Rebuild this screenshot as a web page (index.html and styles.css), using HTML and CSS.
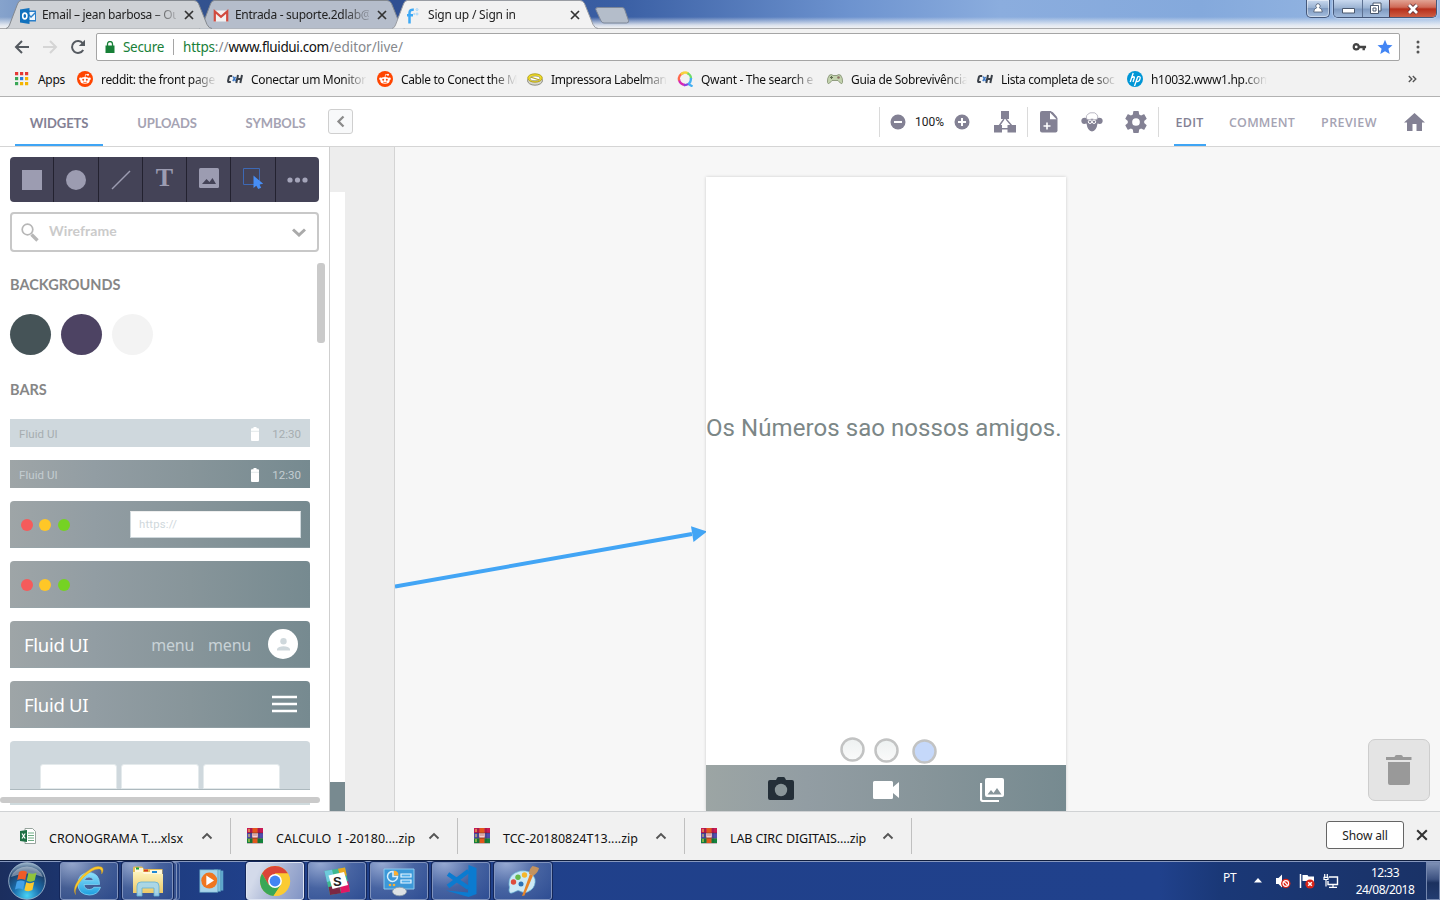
FILE: index.html
```html
<!DOCTYPE html>
<html lang="pt">
<head>
<meta charset="utf-8">
<title>Sign up / Sign in</title>
<link rel="stylesheet" href="styles.css">
</head>
<body>
<svg class="defs" width="0" height="0" aria-hidden="true">
  <defs>
    <radialGradient id="gOrb" cx=".5" cy=".9" r=".9"><stop offset="0" stop-color="#49d3f5"/><stop offset=".4" stop-color="#1a6fae"/><stop offset=".75" stop-color="#1b3e69"/><stop offset="1" stop-color="#9fb9cf"/></radialGradient>
    <linearGradient id="gIe" x1="0" y1="0" x2="0" y2="1"><stop offset="0" stop-color="#8fe0fb"/><stop offset="1" stop-color="#1d9fe0"/></linearGradient>
    <linearGradient id="gFolder" x1="0" y1="0" x2="0" y2="1"><stop offset="0" stop-color="#fdf3bd"/><stop offset="1" stop-color="#ecc968"/></linearGradient>
    <symbol id="x" viewBox="0 0 10 10"><path d="M1 1l8 8M9 1l-8 8" stroke="#333" stroke-width="1.7" fill="none"/></symbol>
    <symbol id="reddit" viewBox="0 0 16 16"><circle cx="8" cy="8" r="8" fill="#ff4500"/><ellipse cx="8" cy="9.400" rx="4.700" ry="3.300" fill="#fff"/><circle cx="3.400" cy="7.800" r="1.200" fill="#fff"/><circle cx="12.600" cy="7.800" r="1.200" fill="#fff"/><circle cx="11" cy="3.800" r="1" fill="#fff"/><path d="M8 6.400l.6-3 2.200.4" stroke="#fff" stroke-width=".7" fill="none"/><circle cx="6.200" cy="8.700" r="1" fill="#ff4500"/><circle cx="9.800" cy="8.700" r="1" fill="#ff4500"/><path d="M6 11q2 1.200 4 0" stroke="#ff4500" stroke-width=".7" fill="none"/></symbol>
    <symbol id="ceh" viewBox="0 0 16 16"><g fill="none" stroke-width="2" stroke="#3a4048"><path d="M5.200 5H3.200q-1 0-1.300 1l-.8 3.600q-.2 1.400.8 1.400h1.900"/><path d="M11 4l-1.700 8M15 4l-1.700 8M10.300 8h4.200"/></g><path d="M6 5.500l2.700 4.700M8.600 6l-2.800 4" stroke="#3d78c4" stroke-width="1.500"/></symbol>
    <symbol id="rar" viewBox="0 0 16 16"><path d="M0 0h16v5H0z" fill="#c81a55"/><path d="M0 5h16v5.400H0z" fill="#514cae"/><path d="M0 10.400h16V15H0z" fill="#13833c"/><path d="M0 15h16v1H0z" fill="#c6b6bd"/><path d="M5.500 0h5v15h-5z" fill="#e2571c"/><path d="M5.500 5h5v5h-5z" fill="#b02424"/><path d="M6 5v4h4V5M8 5v4" stroke="#fff" stroke-width="1.200" fill="none"/><path d="M2 1v3M2 6v3M2 11v3" stroke="#f3d84a"/><path d="M4 0v15M12 0v15M0 5h16M0 10.300h16" stroke="#222" stroke-opacity=".4" stroke-width=".8"/></symbol>
    <symbol id="up" viewBox="0 0 12 8"><path d="M1.500 6.500L6 2l4.500 4.500" fill="none" stroke="#555" stroke-width="1.900"/></symbol>
    <symbol id="battery" viewBox="0 0 8 14"><path d="M2.500 0h3v1.300H7q1 0 1 1V13q0 1-1 1H1q-1 0-1-1V2.300q0-1 1-1h1.500z" fill="#fff"/><path d="M0 4.300h8" stroke="#cfd8dc" stroke-width=".6"/></symbol>
    <symbol id="tabshape" viewBox="0 0 206 29"><path d="M0 28.500Q2.500 28 3.500 25L11.500 4Q12.500.5 15.500.5H188Q191 .5 192.500 3.500L201 24.500Q203 28.500 206 28.500" /></symbol>
  </defs>
</svg>

<div class="screen">
  <header class="titlebar">
    <nav class="tabs">
      <div class="tab first">
        <svg class="shape"><use href="#tabshape"/></svg>
        <svg class="fav" viewBox="0 0 16 16"><path d="M6 2.500h10v11H6z" fill="#2a7fc9"/><path d="M7 4h8v8H7z" fill="#eef6fd"/><path d="M7 5l4 4 5-5" stroke="#2a7fc9" stroke-width="1.400" fill="none"/><path d="M0 1.500L9.500 0v16L0 14.500z" fill="#1171bd"/><ellipse cx="4.800" cy="8" rx="2.100" ry="2.900" fill="none" stroke="#fff" stroke-width="1.600"/></svg>
        <span class="title t1">Email – jean barbosa – Ou</span>
        <svg class="close"><use href="#x"/></svg>
      </div>
      <div class="tab second">
        <svg class="shape"><use href="#tabshape"/></svg>
        <svg class="fav" viewBox="0 0 16 16"><path d="M1 2.500h14v11H1z" fill="#f3f0f0"/><path d="M1.800 13.500v-10L8 8.800l6.200-5.300v10" fill="none" stroke="#d14a3f" stroke-width="2.200"/></svg>
        <span class="title t2">Entrada - suporte.2dlab@</span>
        <svg class="close"><use href="#x"/></svg>
      </div>
      <div class="tab active">
        <svg class="shape"><use href="#tabshape"/></svg>
        <svg class="fav" viewBox="0 0 16 16"><path d="M7.800 1.700Q3.500 1.200 3.500 5v10.500M1 7.300h6" fill="none" stroke="#3fa9f5" stroke-width="2.500"/><g fill="none" stroke="#9bd3fb" stroke-width=".9"><circle cx="11" cy="1.600" r="1"/><circle cx="11" cy="6" r="1"/><circle cx="8.200" cy="6" r=".6"/></g></svg>
        <span class="title t3">Sign up / Sign in</span>
        <svg class="close"><use href="#x"/></svg>
      </div>
      <svg class="newtab" viewBox="0 0 34 17"><path d="M3 .5h24q2 0 2.500 1.500l4 11.500q.5 2.500-2 2.500H9q-2 0-3-2L.8 2.500Q.3.500 3 .5z" fill="#b4bdca" stroke="#7d8798"/></svg>
    </nav>
    <div class="wincontrols">
      <div class="wbtn user"><svg width="10" height="10" viewBox="0 0 10 10"><path d="M5 .7a2.200 2.200 0 0 1 1.200 4Q9.300 5.500 9.300 9H.7Q.7 5.500 3.800 4.700A2.200 2.200 0 0 1 5 .7z" fill="#fff" stroke="#4a586e" stroke-width=".8"/></svg></div>
      <div class="wgroup">
        <div class="wbtn min"><svg width="13" height="6"><path d="M.5 .5h12v4.500H.5z" fill="#fff" stroke="#4a586e"/></svg></div>
        <div class="wbtn max"><svg width="13" height="13"><path d="M4 1h8v8H9.500v2.500h-8v-8H4z" fill="#fff" stroke="#4a586e"/><path d="M4 6h3v3H4zM4 3.500h5.500V9" fill="none" stroke="#4a586e"/></svg></div>
        <div class="wbtn cls"><svg width="14" height="12"><path d="M3 2l8 8M11 2l-8 8" stroke="#5e3038" stroke-width="4.500"/><path d="M3 2l8 8M11 2l-8 8" stroke="#fff" stroke-width="2.800"/></svg></div>
      </div>
    </div>
  </header>

  <div class="toolbar">
    <svg class="nav" viewBox="0 0 16 16"><path d="M15 8H2.500M8 2L2 8l6 6" fill="none" stroke="#555a60" stroke-width="2"/></svg>
    <svg class="nav" viewBox="0 0 16 16"><path d="M1 8h12.500M8 2l6 6-6 6" fill="none" stroke="#d5d5d5" stroke-width="2"/></svg>
    <svg class="nav" viewBox="0 0 16 16"><path d="M13.200 11A6 6 0 1 1 12.800 4.300" fill="none" stroke="#555a60" stroke-width="2"/><path d="M15 .8V7H8.800z" fill="#555a60"/></svg>
    <div class="omnibox">
      <svg class="lock" viewBox="0 0 10 12"><path d="M.5 4.500h9V12h-9z" fill="#188038"/><path d="M2.500 5V3a2.500 2.500 0 0 1 5 0v2" fill="none" stroke="#188038" stroke-width="1.300"/></svg>
      <span class="secure">Secure</span><i class="vr"></i>
      <span class="url"><b>https</b>://<em>www.fluidui.com</em>/editor/live/</span>
      <svg class="key" viewBox="0 0 16 10"><path fill-rule="evenodd" d="M4.500.8a4 4 0 0 1 3.900 2.900H15v2.500h-1.200v2.300h-2.600V6.200H8.400A4 4 0 1 1 4.500.8zm0 2.600a1.500 1.500 0 1 0 0 3 1.500 1.500 0 0 0 0-3z" fill="#444"/></svg>
      <svg class="star" viewBox="0 0 16 16"><path d="M8 .8l2.100 5 5.400.4-4.100 3.600 1.300 5.300L8 12.200l-4.700 2.900 1.300-5.300L.5 6.200l5.400-.4z" fill="#4285f4"/></svg>
    </div>
    <svg class="kebab" viewBox="0 0 4 14"><g fill="#555"><circle cx="2" cy="2" r="1.500"/><circle cx="2" cy="7" r="1.500"/><circle cx="2" cy="12" r="1.500"/></g></svg>
  </div>

  <div class="bookmarks">
    <div class="bm apps"><svg viewBox="0 0 14 14"><path d="M0 0h3.200v3.200H0zM5 0h3.200v3.200H5zM10 0h3.200v3.200H10z" fill="#e53935"/><path d="M0 5h3.200v3.200H0z" fill="#3aa757"/><path d="M5 5h3.200v3.200H5z" fill="#2a7de1"/><path d="M10 5h3.200v3.200H10zM5 10h3.200v3.200H5zM10 10h3.200v3.200H10z" fill="#f4b400"/><path d="M0 10h3.200v3.200H0z" fill="#3aa757"/></svg><span>Apps</span></div>
    <div class="bm"><svg><use href="#reddit"/></svg><span>reddit: the front page</span></div>
    <div class="bm"><svg><use href="#ceh"/></svg><span>Conectar um Monitor</span></div>
    <div class="bm"><svg><use href="#reddit"/></svg><span class="k3">Cable to Conect the M</span></div>
    <div class="bm"><svg viewBox="0 0 16 16"><ellipse cx="8" cy="9.600" rx="7.500" ry="4.600" fill="#d7d7cf" stroke="#77776a" stroke-width=".8"/><ellipse cx="8" cy="7" rx="7.300" ry="4.200" fill="#f2dd25" stroke="#a19115" stroke-width=".8"/><ellipse cx="8" cy="7.400" rx="4.800" ry="2.300" fill="#fff" stroke="#77776a" stroke-width=".6"/><path d="M4 6.300l8 2.500" stroke="#b5a417" stroke-width="1.200"/></svg><span class="k4">Impressora Labelman</span></div>
    <div class="bm"><svg viewBox="0 0 16 16"><g fill="none" stroke-width="2.300"><path d="M8 14A6.200 6.200 0 0 1 2 8" stroke="#d627b3"/><path d="M2 9.500A6.200 6.200 0 0 1 7 1.800" stroke="#ff6a4d"/><path d="M4 3.300A6.200 6.200 0 0 1 11.500 2.700" stroke="#f6d33c"/><path d="M10.500 2.300A6 6 0 0 1 14 8" stroke="#6fdc6a"/><path d="M14 7q0 4.500-2.500 6l4 2.500" stroke="#45b0f2"/><path d="M7 14q2.500.3 4-1" stroke="#8c41e0"/></g></svg><span class="k5">Qwant - The search e</span></div>
    <div class="bm"><svg viewBox="0 0 16 16"><path d="M2.500 4Q5 3 6 4.500h4Q11 3 13.500 4 16 7 15.600 11.500q-.6 2-2.300.5L11 9.500H5L2.700 12Q1 13.500.4 11.500 0 7 2.500 4z" fill="#c3d3ae" stroke="#7d8c6c" stroke-width=".8"/><path d="M4.500 5v3M3 6.500h3" stroke="#5c6a4c"/><circle cx="11.500" cy="6.500" r="1.300" fill="#8a6f62"/></svg><span>Guia de Sobrevivência</span></div>
    <div class="bm"><svg><use href="#ceh"/></svg><span class="k7">Lista completa de soc</span></div>
    <div class="bm"><svg viewBox="0 0 16 16"><circle cx="8" cy="8" r="8" fill="#0096d6"/><path d="M6.200 2L3.200 11M4.700 6.800Q8 4.500 7.200 7.300L6 11M10.800 5.500L7.500 15M10.800 5.700q3.200-.7 2.200 2.200-1 3.400-3.800 2.600" fill="none" stroke="#fff" stroke-width="1.300"/></svg><span class="k8">h10032.www1.hp.com</span></div>
    <svg class="more" viewBox="0 0 9 8"><path d="M.8 1l3 3-3 3M4.800 1l3 3-3 3" fill="none" stroke="#555" stroke-width="1.400"/></svg>
  </div>

  <div class="appbar">
    <nav class="lefttabs"><a class="on">WIDGETS</a><a>UPLOADS</a><a>SYMBOLS</a></nav>
    <div class="collapse"><svg width="9" height="13" viewBox="0 0 9 13"><path d="M7.500 1.500l-5 5 5 5" fill="none" stroke="#8b8b8b" stroke-width="2.300"/></svg></div>
    <div class="tools">
      <i class="sep"></i>
      <svg class="i-minus" width="16" height="16"><circle cx="8" cy="8" r="7.500" fill="#838194"/><path d="M4 8h8" stroke="#fff" stroke-width="2"/></svg>
      <span class="zoom">100%</span>
      <svg class="i-plus" width="16" height="16"><circle cx="8" cy="8" r="7.500" fill="#838194"/><path d="M4 8h8M8 4v8" stroke="#fff" stroke-width="2"/></svg>
      <svg class="i-tree" width="22" height="22" viewBox="0 0 22 22"><path d="M7 0h8v8H7zM0 14h8v7.500H0zM13.500 14H22v7.500h-8.500z" fill="#838194"/><path d="M10 8l-5 7M12 8l6 7M8 17.700h6" stroke="#838194" stroke-width="1.400"/></svg>
      <i class="sep s2"></i>
      <svg class="i-page" width="18" height="22" viewBox="0 0 18 22"><path d="M2 0h9l6.500 7v12.500q0 2-2 2H2q-2 0-2-2V2q0-2 2-2z" fill="#838194"/><path d="M10 1.500l6.500 6.700H10z" fill="#fff"/><path d="M11.500 2.200l5.500 5.300V6L12.500.8z" fill="#838194"/><path d="M3.500 15h7M7 11.500v7" stroke="#fff" stroke-width="1.600"/></svg>
      <svg class="i-sheep" width="22" height="20" viewBox="0 0 22 20"><path d="M5.500 6Q.5 5 .3 9q.5 4 5.200 2.500Q6.500 19 11 19.500q4.500-.5 5.500-8 4.700 1.500 5.200-2.500-.2-4-5.200-3z" fill="#838194"/><path d="M5.500 7Q4.500 3 7 2.200 9 .2 11 .8q3-.6 4.500 1.400Q17.500 3.500 16.500 7q-2 1.500-5.500 0-3.500 1.500-5.500 0z" fill="#fff" stroke="#a9a7b5" stroke-width=".8"/><circle cx="9" cy="9.800" r="1.700" fill="#838194" stroke="#fff"/><circle cx="13" cy="9.800" r="1.700" fill="#838194" stroke="#fff"/></svg>
      <svg class="i-gear" width="22" height="22" viewBox="2 2 20 20"><path fill="#838194" d="M19.430 12.980c.04-.32.07-.64.07-.98s-.03-.66-.07-.98l2.110-1.650c.19-.15.24-.42.12-.64l-2-3.460c-.12-.22-.39-.3-.61-.22l-2.490 1c-.52-.4-1.080-.73-1.690-.98l-.38-2.650C14.460 2.180 14.250 2 14 2h-4c-.25 0-.46.18-.49.42l-.38 2.650c-.61.25-1.170.59-1.690.98l-2.490-1c-.23-.09-.49 0-.61.22l-2 3.460c-.13.22-.07.49.12.64l2.110 1.650c-.04.32-.07.65-.07.98s.03.66.07.98l-2.110 1.650c-.19.15-.24.42-.12.64l2 3.460c.12.22.39.3.61.22l2.490-1c.52.4 1.080.73 1.690.98l.38 2.650c.03.24.24.42.49.42h4c.25 0 .46-.18.49-.42l.38-2.650c.61-.25 1.170-.59 1.690-.98l2.490 1c.23.09.49 0 .61-.22l2-3.460c.12-.22.07-.49-.12-.64zM12 15.500a3.500 3.500 0 1 1 0-7 3.500 3.500 0 0 1 0 7z"/></svg>
      <i class="sep s3"></i>
      <nav class="modes"><a class="on m1">EDIT</a><a class="m2">COMMENT</a><a class="m3">PREVIEW</a></nav>
      <svg class="i-home" width="21" height="18" viewBox="0 0 21 18"><path d="M10.500 0L21 9.500h-3V18h-5.500v-7h-4v7H3V9.500H0z" fill="#838194"/></svg>
    </div>
  </div>

  <main class="work">
    <aside class="panel">
      <div class="toolbox">
        <div><svg width="20" height="20"><path d="M0 0h20v20H0z" fill="#9c9cb1"/></svg></div>
        <div><svg width="20" height="20"><circle cx="10" cy="10" r="10" fill="#9c9cb1"/></svg></div>
        <div><svg width="20" height="20"><path d="M1 19L19 1" stroke="#9c9cb1" stroke-width="1.500"/></svg></div>
        <div class="tee">T</div>
        <div><svg class="lift" width="20" height="20"><rect width="20" height="20" rx="1.500" fill="#9c9cb1"/><path d="M3 16l4.500-5 3 3 3-4L17 16z" fill="#444357"/></svg></div>
        <div><svg class="lift" width="24" height="22"><path d="M2.500 1.500h16v16h-16z" fill="none" stroke="#3d69b5"/><path d="M12.500 8.500v12.500l2.800-2.200 1.900 3.200 3-1.300-1.700-3.300 3.700-.6z" fill="#478ef5"/></svg></div>
        <div><svg width="21" height="6"><g fill="#a5a5ba"><circle cx="3" cy="3" r="2.600"/><circle cx="10.500" cy="3" r="2.600"/><circle cx="18" cy="3" r="2.600"/></g></svg></div>
      </div>
      <div class="search">
        <svg width="18" height="19"><circle cx="6.500" cy="6.500" r="5.300" fill="none" stroke="#b7b7b7" stroke-width="1.700"/><path d="M10.500 11.500l6 6" stroke="#b7b7b7" stroke-width="3.300"/></svg>
        <span>Wireframe</span>
        <svg width="14" height="9"><path d="M1 1.500l6 5.500 6-5.500" fill="none" stroke="#aaa" stroke-width="3"/></svg>
      </div>
      <div class="list">
        <h3>BACKGROUNDS</h3>
        <div class="swatches"><i class="sw1"></i><i class="sw2"></i><i class="sw3"></i></div>
        <h3 class="h-bars">BARS</h3>
        <div class="status light"><span>Fluid UI</span><svg><use href="#battery"/></svg><time>12:30</time></div>
        <div class="status grad"><span>Fluid UI</span><svg><use href="#battery"/></svg><time>12:30</time></div>
        <div class="bar grad"><b class="d r"></b><b class="d y"></b><b class="d g"></b><span class="addr">https://</span></div>
        <div class="bar grad"><b class="d r"></b><b class="d y"></b><b class="d g"></b></div>
        <div class="bar grad"><span class="brand">Fluid UI</span><span class="menu">menu</span><span class="menu">menu</span><span class="avatar"><svg width="13" height="13"><circle cx="6.500" cy="3.200" r="3.200" fill="#cfd8dc"/><path d="M0 12.500v-1.500q1.500-2.800 6.500-2.800t6.500 2.800v1.500z" fill="#cfd8dc"/></svg></span></div>
        <div class="bar grad"><span class="brand">Fluid UI</span><svg class="burger" width="25" height="18"><path d="M0 2h25M0 9h25M0 16h25" stroke="#fff" stroke-width="2.300"/></svg></div>
        <div class="bar tabsbar"><i></i><i></i><i></i></div>
        <div class="nextbar"></div>
        <div class="vscroll"></div>
        <div class="hscroll"></div>
      </div>
    </aside>
    <section class="canvas">
      <div class="strip"><div class="prev"></div></div>
      <svg class="link" width="312" height="80"><path d="M0 60.500L297 8" stroke="#42a5f5" stroke-width="4"/><path d="M296 .3L312 5.500 298.500 16z" fill="#42a5f5"/></svg>
      <div class="phone">
        <p>Os Números sao nossos amigos.</p>
        <svg class="rings" width="98" height="28"><defs><linearGradient id="gr" x1="0" y1="0" x2="0" y2="1"><stop offset="0" stop-color="#edf1f1"/><stop offset="1" stop-color="#fafafa"/></linearGradient></defs><g stroke="#c2c3c3" stroke-width="2.500"><circle cx="12.500" cy="12.500" r="11" fill="url(#gr)"/><circle cx="46.500" cy="13.500" r="11" fill="url(#gr)"/><circle cx="84.500" cy="14.500" r="11" fill="#c5d8fa"/></g></svg>
        <div class="phonebar">
          <svg width="26" height="24" viewBox="0 0 26 24"><path d="M9 1q.5-1 1.500-1h5Q16.500 0 17 1l1 2h6q2 0 2 2v16q0 2-2 2H2q-2 0-2-2V5q0-2 2-2h6z" fill="#242f38"/><circle cx="13" cy="13" r="6.200" fill="#8a9699"/></svg>
          <svg width="26" height="20" viewBox="0 0 26 20"><path d="M1.500 1h17q1.500 0 1.500 1.500V7l6-5v16l-6-5v4.500q0 1.500-1.500 1.500h-17Q0 19 0 17.500v-15Q0 1 1.500 1z" fill="#fff"/></svg>
          <svg class="gal" width="24" height="24" viewBox="0 0 24 24"><path d="M7 0h15q2 0 2 2v15q0 2-2 2H7q-2 0-2-2V2q0-2 2-2z" fill="#fff"/><path d="M1 5v16q0 2 2 2h16" stroke="#fff" stroke-width="2.200" fill="none"/><path d="M7.500 16.500l3.500-4.500 2.500 3 3.500-5 4.500 6.500z" fill="#87959a"/></svg>
        </div>
      </div>
      <div class="trash"><svg width="26" height="30"><path d="M0 2h8.500q.5-2 2-2h4.500q1.500 0 2 2h8.500v3H0zM2 7h22v21q0 2-2 2H4q-2 0-2-2z" fill="#999"/></svg></div>
    </section>
  </main>

  <footer class="downloads">
    <div class="dl"><svg viewBox="0 0 16 16"><path d="M5 .5h7.500l3 3v12H5z" fill="#fff" stroke="#8b9a92" stroke-width=".9"/><path d="M8 5h6M8 7.500h6M8 10h6M8 12.500h6" stroke="#6dac83"/><path d="M0 3l7-1v12l-7-1z" fill="#1d7044"/><path d="M2 5.500l3.200 5M5.200 5.500l-3.200 5" stroke="#fff" stroke-width="1.200"/></svg><span>CRONOGRAMA T....xlsx</span><svg class="up"><use href="#up"/></svg></div>
    <div class="dl"><svg><use href="#rar"/></svg><span>CALCULO&nbsp; I -20180....zip</span><svg class="up"><use href="#up"/></svg></div>
    <div class="dl"><svg><use href="#rar"/></svg><span>TCC-20180824T13....zip</span><svg class="up"><use href="#up"/></svg></div>
    <div class="dl"><svg><use href="#rar"/></svg><span class="d4">LAB CIRC DIGITAIS....zip</span><svg class="up"><use href="#up"/></svg></div>
    <button class="showall">Show all</button>
    <svg class="dx"><use href="#x"/></svg>
  </footer>

  <div class="taskbar">
    <svg class="orb" viewBox="0 0 38 38"><circle cx="19" cy="19" r="18.300" fill="url(#gOrb)" stroke="#9db4cc" stroke-width=".9"/><path d="M3 15A17 16 0 0 1 35 15Q19 8 3 15z" fill="#fff" opacity=".38"/><path d="M11 10q4-2.500 8 0l-1.800 8q-4-2-8 0z" fill="#ee5c28"/><path d="M20.500 10.800q4 2.200 8-.3l-1.800 8q-4 2.200-8 .2z" fill="#90c43c"/><path d="M8.800 19.500q4-2.200 8 0l-1.800 8q-4-2.200-8 0z" fill="#42a0e8"/><path d="M18.200 20.300q4 2 8-.2l-1.800 8q-4 2.200-8 .2z" fill="#fbc82e"/></svg>
    <div class="task"><svg viewBox="0 0 32 32"><path d="M25.500 19.500H11q.5 5 5.500 5 3 0 4.500-2.200h6.500Q25 30 16.300 30 5 29.500 4.800 18.500 5.500 8 16 7.500q10.500.5 10.500 12zM11.200 15.500h9.300q-.8-3.500-4.500-3.500-4 0-4.800 3.500z" fill="url(#gIe)" stroke="#7fd4f7" stroke-width=".8"/><path d="M2.500 29.500Q-1.500 22 9 11 21-1 28.500 2q3 2 .2 7 .5-4-2-5Q20 3 10 13 .5 24 2.500 29.500z" fill="#fcc92c" stroke="#e0a312" stroke-width=".4"/></svg></div>
    <div class="task stack"><svg viewBox="0 0 32 32"><path d="M1 3q0-1.500 1.500-1.500H10L12 4h18.500v24H1z" fill="#e3be58"/><path d="M3 3h8v4h7V5h12v6H3z" fill="#fff7da"/><path d="M4 2.500h3v2H4z" fill="#15a03a"/><path d="M12 4.500h4v2h-4z" fill="#d83a20"/><path d="M20 6h5v2h-5z" fill="#2088d5"/><path d="M1 7h9l2 2h19v19H1z" fill="url(#gFolder)"/><path d="M5 31V21q0-4 4-4h14q4 0 4 4v10h-5v-8H10v8z" fill="#a4d6ee" fill-opacity=".92" stroke="#62aed2" stroke-width=".8"/></svg></div>
    <div class="task plain"><svg viewBox="0 0 32 32"><path d="M22 4h7v22h-7z" fill="#5fa7cc"/><path d="M19 3h7v24h-7z" fill="#83c2dd" stroke="#4e92b5" stroke-width=".6"/><path d="M3 3h20v25H3z" fill="#a8d5e9" stroke="#4e92b5" stroke-width=".6"/><circle cx="13.500" cy="15" r="8.800" fill="#ef7620"/><path d="M10.300 9.500l8.500 5.500-8.500 5.500z" fill="#fff"/></svg></div>
    <div class="task on"><svg viewBox="0 0 32 32"><circle cx="16" cy="16" r="15" fill="#fbcb33"/><path d="M3 8.500A15 15 0 0 1 29 8.500H16L9.500 19.700z" fill="#db4437"/><path d="M3 8.500A15 15 0 0 0 14.500 31L22.500 19.500H9.500z" fill="#3aa757"/><path d="M16 8.500h13A15 15 0 0 1 14.500 31L22 19.500z" fill="#fbcb33"/><circle cx="16" cy="16" r="6.900" fill="#fff"/><circle cx="16" cy="16" r="5.400" fill="#4285f4"/></svg></div>
    <div class="task"><svg viewBox="0 0 32 32"><path d="M3.500 6L24 2.500l5 24L9 30z" fill="#3eb991"/><path d="M3.500 6L11 4.700l2.500 10L6 17z" fill="#6ecadc"/><path d="M17 3.700l7-1.200 1.800 8L19 11z" fill="#e9a820"/><path d="M24 17l3.200-.8L29 26.500l-9 1.700-1-7z" fill="#e01765"/><path d="M7.500 22L18 20l2 8.200L9 30z" fill="#7c2844"/><path d="M7.500 10.500L23 7l4 13-15.500 4z" fill="#fff"/><text class="slack" x="12" y="20.500">S</text></svg></div>
    <div class="task"><svg viewBox="0 0 32 32"><path d="M1 4h30v20H1z" fill="#3c98d8" stroke="#8fc9ed"/><path d="M10 6.500a5 5 0 1 0 4.500 5H10z" fill="none" stroke="#d9effc" stroke-width="1.500"/><path d="M11 5.500a5 5 0 0 1 4.500 5H11z" fill="#fdae30"/><path d="M18 9h10v3H18zM18 15h10v3H18z" fill="#4fadea" stroke="#e8f6ff" stroke-width="1.200"/><circle cx="7" cy="20" r="1.300" fill="#fdae30"/><circle cx="11" cy="20" r="1.300" fill="#fdae30"/><ellipse cx="16.500" cy="26.500" rx="7" ry="4.300" fill="#dde1e4" stroke="#899aa8" stroke-width=".8"/></svg></div>
    <div class="task"><svg viewBox="0 0 32 32"><path d="M23.500 0L31.500 3v26l-8 3L1 25.500l22 2z" fill="#0b7bd0"/><path d="M3 9l20.500 14M3 21.500L23.500 6" stroke="#0b7bd0" stroke-width="4.200"/></svg></div>
    <div class="task"><svg viewBox="0 0 32 32"><path d="M2 20Q1 9 13 6q12-1.500 15 8 1 7-4 11-5 4-9 2-4-3-7.500 0Q2 30 2 25q1-3 0-5z" fill="#cce9f6" stroke="#69b3d7" stroke-width=".7"/><circle cx="6.500" cy="17" r="2.700" fill="#dd4c3c"/><circle cx="11" cy="12.200" r="2.700" fill="#65b94a"/><circle cx="17.500" cy="10" r="2.700" fill="#f5b72c"/><circle cx="14" cy="19" r="2.500" fill="#2c71b6"/><path d="M15 31l8-22 3 1.500-8.500 20z" fill="#e78428"/><path d="M22 9q0-5 3.500-8 3 .5 6.500 2-1 5-5.500 7.500z" fill="#c4935f"/></svg></div>
    <div class="tray">
      <span class="lang">PT</span>
      <svg class="arr" width="8" height="5"><path d="M4 0l4 4.500H0z" fill="#fff"/></svg>
      <svg class="tr" viewBox="0 0 16 16"><path d="M1 5h2.500L7 1.500v13L3.500 11H1z" fill="#fff"/><circle cx="10.800" cy="10.500" r="4.700" fill="#d92418"/><circle cx="10.800" cy="10.500" r="2.800" fill="none" stroke="#fff" stroke-width="1.200"/><path d="M9 8.700l3.600 3.600" stroke="#fff" stroke-width="1.200"/></svg>
      <svg class="tr" viewBox="0 0 16 16"><path d="M1.500 1v14" stroke="#fff" stroke-width="1.500"/><path d="M3.500 2h5l1 1.500H15V9H9L8 8H3.500z" fill="#fff"/><circle cx="11" cy="11" r="4.600" fill="#d92418"/><path d="M9.200 9.200l3.600 3.600M12.800 9.200l-3.600 3.600" stroke="#fff" stroke-width="1.500"/></svg>
      <svg class="tr" viewBox="0 0 16 16"><path d="M6 4h8.500v7.500H5V8" fill="none" stroke="#fff" stroke-width="1.400"/><path d="M6 14.300h8M10 12v2M1.700 1v3M4.300 1v3M1 4.300h4v2.200H1zM3 6.500v7" fill="none" stroke="#fff" stroke-width="1.200"/></svg>
      <div class="clock"><span>12:33</span><span class="date">24/08/2018</span></div>
      <div class="peek"></div>
    </div>
  </div>
</div>
</body>
</html>
```
FILE: styles.css
```css
* { box-sizing: border-box; }
body { margin: 0; background: #fff; font-family: "Noto Sans", "Open Sans", sans-serif; overflow: hidden; }
svg { display: block; flex: none; }
.defs { position: absolute; }
i, em, b { font-style: normal; font-weight: normal; }
.screen { width: 1440px; height: 900px; display: flex; flex-direction: column; overflow: hidden; }

/* Title bar */
.titlebar {
  height: 29px; flex: none; display: flex; justify-content: space-between; align-items: flex-start;
  border-bottom: 1px solid #a9aaac;
  background:
    linear-gradient(rgba(240,242,245,0) 17px, rgba(240,242,245,.85) 25px, #f0f1f3 28px),
    linear-gradient(90deg, #86a3cc 0, #5c7db8 100px, #33528f 200px, #2f4f92 400px, #3a5fa4 620px, #6d93cf 850px, #8badde 1000px, #84a9dc 1200px, #9cbbe4 1440px);
}
.tabs { display: flex; padding-left: 6px; height: 29px; position: relative; }
.tab { position: relative; width: 206px; height: 29px; margin-right: -13px; padding: 1px 0 0 14px; display: flex; align-items: center; flex: none; }
.tab .shape { position: absolute; left: 0; top: 0; width: 206px; height: 29px; fill: #c2c8d1; stroke: #84898f; }
.tab.first { z-index: 2; }
.tab.first .shape { fill: #ced1d5; }
.tab.second .shape { fill: #b5bdcb; }
.tab.active { z-index: 3; }
.tab.active .shape { fill: #f2f2f2; stroke: #9a9da3; }
.tab.active { margin-right: 0; }
.fav { width: 16px; height: 16px; position: relative; margin-bottom: -1px; }
.title { position: relative; margin-left: 6px; width: 134px; height: 18px; line-height: 18px; font-size: 12px; white-space: nowrap; color: #222; -webkit-mask-image: linear-gradient(90deg, #000 108px, transparent 140px); mask-image: linear-gradient(90deg, #000 108px, transparent 140px); }
.close { position: relative; width: 10px; height: 10px; margin-left: 8px; }
.newtab { width: 34px; height: 17px; margin: 7px 0 0 -3px; }
.t1 { letter-spacing: -.32px; }
.t2 { letter-spacing: -.3px; }
.t3 { letter-spacing: -.2px; }
.wincontrols { display: flex; gap: 3px; padding-right: 3px; }
.wbtn { height: 18px; display: flex; align-items: center; justify-content: center; padding-bottom: 1px; background: linear-gradient(#c9d9ef, #9ab2d2 45%, #7f9ac0 50%, #a5bedf); }
.user { width: 24px; border: 1px solid #45587a; border-top: 0; border-radius: 0 0 5px 5px; box-shadow: inset 0 0 0 1px rgba(255,255,255,.45); }
.wgroup { display: flex; border: 1px solid #45587a; border-top: 0; border-radius: 0 0 5px 5px; overflow: hidden; height: 18px; box-shadow: 0 0 2px #fff; }
.min { width: 28px; padding-top: 4px; }
.max { width: 27px; border-left: 1px solid #5d7192; padding-right: 2px; }
.cls { width: 47px; border-left: 1px solid #5d3038; background: linear-gradient(#e2a394, #cf6a57 40%, #b72f1b 50%, #d0644a); }

/* Address bar */
.toolbar { height: 35px; flex: none; background: #f2f2f2; display: flex; align-items: center; padding: 1px 19px 0 14px; }
.nav { width: 16px; height: 16px; margin-right: 12px; }
.nav:nth-child(3) { margin-right: 10px; }
.omnibox { width: 1304px; height: 28px; border: 1px solid #a5a5a5; border-radius: 2px; background: #fff; display: flex; align-items: center; padding: 0 6px 0 8px; font-size: 14px; }
.lock { width: 10px; height: 12px; }
.secure { color: #188038; margin-left: 8px; width: 42px; letter-spacing: -.3px; font-size: 13.500px; white-space: nowrap; }
.vr { width: 1px; height: 16px; background: #a5a5a5; margin: 0 9px 0 8px; }
.url { flex: 1; color: #85888c; font-size: 13.500px; letter-spacing: -.04px; }
.url b { color: #188038; letter-spacing: -.2px; }
.url em { color: #111; letter-spacing: -.36px; }
.key { width: 15px; height: 10px; margin-right: 10px; }
.star { width: 16px; height: 16px; }
.kebab { width: 4px; height: 14px; margin-left: 16px; }

/* Bookmarks */
.bookmarks { height: 33px; flex: none; background: #f2f2f2; border-bottom: 1px solid #b2b2b2; display: flex; align-items: center; padding: 0 23px 2px 15px; font-size: 12px; color: #111; }
.bm { width: 150px; display: flex; align-items: center; gap: 8px; flex: none; }
.bm svg { width: 16px; height: 16px; }
.bm span { width: 116px; margin-right: -4px; white-space: nowrap; letter-spacing: -.32px; -webkit-mask-image: linear-gradient(90deg, #000 92px, transparent 116px); mask-image: linear-gradient(90deg, #000 92px, transparent 116px); }
.bm .k3, .bm .k7 { letter-spacing: -.36px; }
.bm .k4 { letter-spacing: -.4px; }
.apps { width: 62px; gap: 9px; }
.apps svg { width: 14px; height: 14px; }
.apps span { width: 30px; -webkit-mask-image: none; mask-image: none; }
.more { width: 9px; height: 8px; margin-left: auto; }

/* Editor header */
.appbar { height: 50px; flex: none; border-bottom: 1px solid #d5d5d5; background: #fff; display: flex; align-items: center; font-family: Lato, sans-serif; font-weight: bold; font-size: 13px; color: #a5a3b3; }
.appbar a { height: 49px; display: flex; align-items: center; justify-content: center; padding-top: 4px; border-bottom: 2px solid transparent; }
.appbar a.on { color: #838194; border-color: #3fa5f5; }
.lefttabs { display: flex; gap: 20px; padding-left: 15px; width: 328px; letter-spacing: -.1px; }
.lefttabs a { width: 88px; }
.lefttabs a:last-child { padding-left: 1px; }
.collapse { width: 25px; height: 25px; border: 1px solid #cfcfcf; border-radius: 3px; background: #f8f9fa; display: flex; align-items: center; justify-content: center; }
.tools { margin-left: auto; width: 561px; display: flex; align-items: center; }
.sep { width: 1px; height: 30px; background: #dadada; }
.i-minus { margin-left: 9.500px; }
.zoom { margin-left: 9.500px; width: 31px; font: 12px Roboto, sans-serif; color: #222; }
.i-plus { margin-left: 7.500px; }
.i-tree { margin-left: 24.500px; }
.s2 { margin-left: 11px; }
.i-page { margin-left: 12px; }
.i-sheep { margin-left: 23px; }
.i-gear { margin-left: 21.500px; }
.s3 { margin-left: 11.500px; }
.modes { display: flex; font: 600 12.500px "Open Sans", sans-serif; }
.m1 { width: 32px; margin-left: 15px; padding-right: 1px; letter-spacing: .3px; }
.m2 { width: 68px; margin-left: 22px; letter-spacing: .2px; }
.m3 { width: 58px; margin-left: 24px; letter-spacing: .4px; }
.i-home { margin-left: 26px; }

/* Workspace */
.work { flex: 1; display: flex; min-height: 0; }
.panel { width: 330px; border-right: 1px solid #cfcfcf; background: #fff; padding-top: 10px; display: flex; flex-direction: column; flex: none; }
.toolbox { margin: 0 10px; width: 309px; height: 45px; flex: none; border-radius: 4px; background: #444357; display: grid; grid-template-columns: 44px 45px 44px 44px 44px 45px 43px; overflow: hidden; }
.toolbox div { display: flex; align-items: center; justify-content: center; border-right: 1px solid #232230; }
.toolbox div:last-child { border: 0; }
.toolbox .lift { margin-bottom: 3px; }
.toolbox .tee { font: bold 26px "Liberation Serif", serif; color: #9c9cb1; padding-bottom: 3px; }
.search { margin: 10px 10px 0; width: 309px; height: 40px; flex: none; border: 2px solid #c8c8c8; border-radius: 4px; display: flex; align-items: center; padding: 0 11px 0 9px; }
.search span { flex: 1; margin-left: 10px; font: bold 14px Lato, sans-serif; letter-spacing: .1px; color: #cbcbcb; padding-bottom: 3px; }
.list { position: relative; flex: 1; min-height: 0; padding: 23px 0 0 10px; overflow: hidden; }
.list h3 { margin: 0; height: 20px; font: bold 14.500px/20px Lato, sans-serif; color: #868686; }
.swatches { display: flex; gap: 10px; margin-top: 19px; }
.swatches i { width: 41px; height: 41px; border-radius: 50%; }
.sw1 { background: #455357; }
.sw2 { background: #4d4363; }
.sw3 { background: #f3f3f3; }
.list .h-bars { margin: 25px 0 19px; }
.grad { background: linear-gradient(90deg, #9ea5a7, #929da3 28%, #87959a 60%, #768a90); }
.light { background: #cfd8dd; }
.status { width: 300px; height: 28px; margin-bottom: 13px; display: flex; align-items: center; padding: 2px 9px 0; font: 11.500px Roboto, sans-serif; color: #a6adb0; }
.status.grad { color: #c4cdd1; }
.status span { flex: 1; letter-spacing: .05px; }
.status svg { width: 8px; height: 14px; margin: 0 13px 1px 0; }
.status time { width: 29px; text-align: right; }
.bar { width: 300px; height: 47px; margin-bottom: 13px; border-radius: 4px 4px 0 0; box-shadow: inset 0 -1px rgba(150,165,170,.6); display: flex; align-items: center; padding: 0 10px; font-family: "Noto Sans", sans-serif; }
.d { width: 12px; height: 12px; border-radius: 50%; margin: 1px 6px 0 .7px; }
.r { background: #f55b5b; }
.y { background: #ffc727; }
.g { background: #75d223; }
.addr { margin-left: auto; width: 171px; height: 27px; background: #fff; border: 1px solid #cfd8dc; border-top-color: #eee; font: 11.300px/26px Roboto, sans-serif; color: #cfd8dc; padding-left: 8px; margin-right: -1px; letter-spacing: .2px; }
.brand { font-size: 18.500px; color: #fff; margin: 0 auto 0 4px; letter-spacing: -.3px; }
.menu { font-size: 16px; color: #c8d2d6; margin-right: 14px; letter-spacing: -.22px; }
.avatar { width: 30px; height: 30px; border-radius: 50%; background: #fff; display: flex; align-items: center; justify-content: center; margin: 0 2px 1px 3px; }
.burger { margin: 0 3px 1px 0; }
.tabsbar { height: 49px; background: #cfd8dd; margin-bottom: 11px; padding: 21px 30px 0; gap: 4px; }
.tabsbar i { flex: 1; height: 25px; background: #fff; border: 1px solid #e4eaec; border-radius: 3px 3px 0 0; }
.nextbar { width: 300px; height: 4px; background: #cfdadd; }
.vscroll { position: absolute; left: 317px; top: 11px; width: 8px; height: 80px; border-radius: 3px; background: #cacaca; }
.hscroll { position: absolute; left: 0; top: 545px; width: 320px; height: 6px; border-radius: 3px; background: #cacaca; }

.canvas { flex: 1; position: relative; background: #f7f7f7; overflow: hidden; }
.strip { width: 65px; height: 100%; background: #ededed; border-right: 1px solid #d4d4d4; padding-top: 45px; }
.prev { width: 15px; height: 100%; background: linear-gradient(#fff 590px, #788a90 590px); }
.link { position: absolute; left: 65px; top: 379px; }
.phone { position: absolute; left: 376px; top: 30px; width: 360px; height: 634px; background: #fff; box-shadow: 0 0 3px rgba(0,0,0,.18); display: flex; flex-direction: column; align-items: center; }
.phone p { margin: 235px 0 0; width: 360px; height: 32px; font: 24px/32px Roboto, sans-serif; letter-spacing: .07px; color: #7c8787; white-space: nowrap; }
.rings { margin: auto 0 0 5px; }
.phonebar { width: 360px; height: 46px; background: linear-gradient(90deg, #9ca5a4, #929da3 28%, #87959a 60%, #768a90); display: grid; grid-template-columns: 150px 60px 150px; align-items: center; justify-items: center; padding-top: 4px; }
.phonebar svg:first-child { margin-bottom: 2px; }
.phonebar .gal { margin-left: 2px; }
.trash { position: absolute; left: 1038px; top: 592px; width: 62px; height: 62px; border: 1px solid #cdcdcd; border-radius: 7px; background: #e4e4e4; display: flex; align-items: center; justify-content: center; }

/* Downloads shelf */
.downloads { height: 49px; flex: none; border-top: 1px solid #d0d2d4; background: #f1f1f1; display: flex; align-items: center; padding-left: 4px; font-size: 12.500px; color: #111; }
.dl { width: 227px; height: 36px; border-right: 1px solid #c0c0c0; display: flex; align-items: center; padding-left: 16px; flex: none; }
.dl > svg:first-child { width: 16px; height: 16px; }
.dl span { margin: 5px 0 0 13px; width: 139px; white-space: nowrap; letter-spacing: 0; }
.dl .d4 { letter-spacing: -.12px; }
.up { width: 12px; height: 8px; margin-left: 13px; }
.showall { margin: 0 0 2px auto; width: 78px; height: 28px; border: 1px solid #656565; border-radius: 3px; background: #fff; font: 12px "Noto Sans", sans-serif; color: #222; letter-spacing: -.12px; padding: 0; }
.dx { width: 12px; height: 12px; margin: 0 12px 2px 12px; }

/* Taskbar */
.taskbar { height: 40px; flex: none; display: flex; align-items: center; border-top: 1px solid #0f1e3e; box-shadow: inset 0 1px #8798be; background: linear-gradient(90deg, #1b2e5e 0, #1d3a7b 120px, #20408a 250px, #20418c 1160px, #1a3877 1220px, #1a3266 1440px); }
.orb { width: 38px; height: 38px; margin: 0 14px 0 8px; }
.task { width: 58px; height: 38px; margin-right: 4px; border: 1px solid #8093bd; border-radius: 3px; box-shadow: 0 0 0 1px #14275a; background: radial-gradient(ellipse at 20% 0, rgba(190,205,235,.75), rgba(110,135,185,.5) 50%, rgba(60,90,155,.5) 100%); display: flex; align-items: center; justify-content: center; flex: none; }
.task svg { width: 32px; height: 32px; }
.task.stack { width: 51px; margin-right: 11px; box-shadow: 0 0 0 1px #14275a, 4px 0 0 -1px #35508d, 4px 0 #8093bd, 7px 0 0 -1px #2a4788, 7px 0 #6077aa; }
.task.plain { background: none; border-color: transparent; box-shadow: none; width: 58px; padding-right: 3px; }
.task.plain svg { width: 29px; height: 29px; margin-top: 2px; }
.task.on { background: linear-gradient(115deg, #d3daea 20%, #a3b0d2 60%, #8194c5); border-color: #dde4f2; }
.slack { font: bold 13px "Liberation Sans", sans-serif; fill: #222; }
.tray { margin-left: auto; height: 39px; display: flex; align-items: center; color: #fff; }
.lang { font-size: 12px; margin: -6px 17px 0 0; width: 14px; letter-spacing: -.3px; }
.arr { margin-right: 13px; }
.tr { width: 16px; height: 16px; margin-right: 8px; }
.clock { width: 72px; margin-left: 2px; font-size: 12px; line-height: 17px; letter-spacing: -.52px; display: flex; flex-direction: column; align-items: center; margin-right: 5px; }
.peek { width: 14px; height: 38px; border: 1px solid #7587ae; background: linear-gradient(#7d8fb4, #3c5180 45%, #1c315f 55%, #233c70); }
```
